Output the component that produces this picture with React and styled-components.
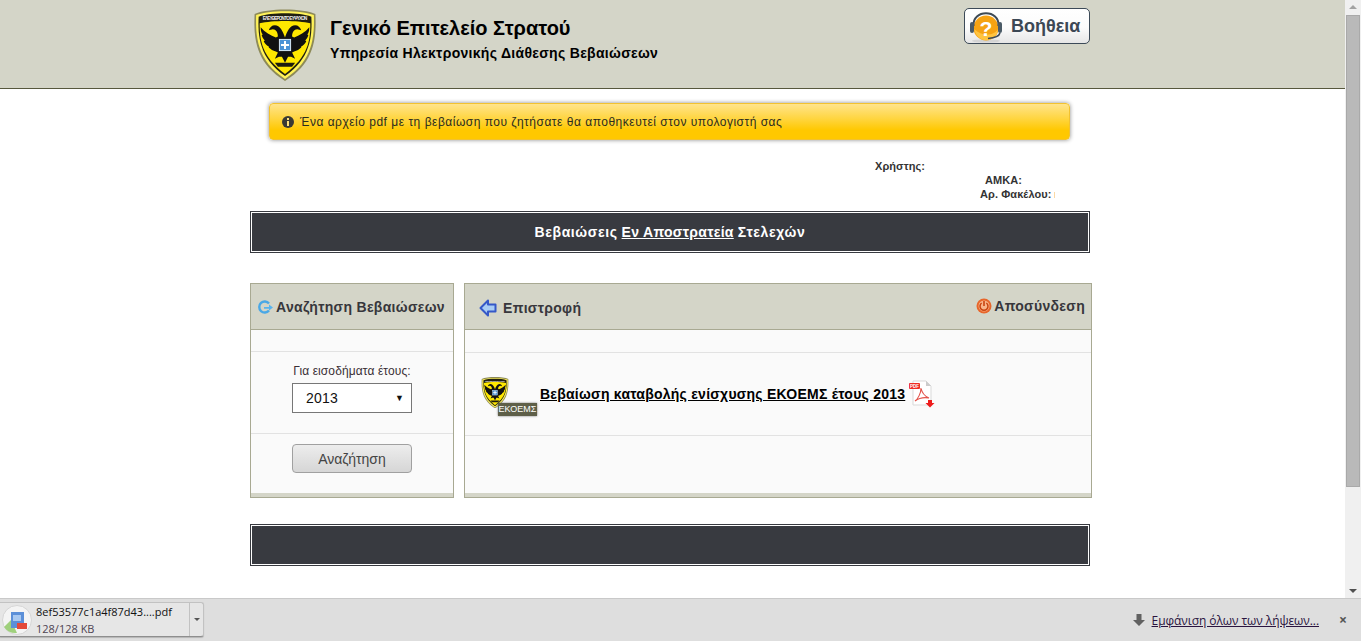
import styled, { createGlobalStyle } from "styled-components";

const GlobalStyle = createGlobalStyle`
  html, body {
    margin: 0;
    padding: 0;
    height: 100%;
    overflow: hidden;
    background: #fff;
    font-family: "Liberation Sans", Arial, sans-serif;
  }
`;

const Screen = styled.div`
  width: 1361px;
  height: 641px;
  display: grid;
  grid-template-columns: 1345px 16px;
  grid-template-rows: 598px 43px;
`;

const Page = styled.div`
  overflow: hidden;
  background: #fff;
`;

const Header = styled.header`
  height: 88px;
  background: #d4d5c8;
  border-bottom: 1px solid #57583d;
`;

const Wrap = styled.div`
  width: 840px;
  margin-left: 250px;
`;

const HeaderRow = styled(Wrap)`
  height: 88px;
  display: flex;
  align-items: flex-start;
`;

const LogoBox = styled.div`
  margin: 7px 0 0 3px;
  width: 64px;
  height: 74px;
`;

const Titles = styled.div`
  margin: 17px 0 0 13px;
  flex: 1;
  color: #000;
  font-weight: bold;
`;

const Title = styled.div`
  font-size: 20px;
  line-height: 23px;
`;

const Subtitle = styled.div`
  margin-top: 5px;
  font-size: 14px;
  line-height: 16px;
  letter-spacing: 0.3px;
`;

const HelpButton = styled.div`
  margin: 8px 0 0;
  width: 120px;
  height: 34px;
  border: 1px solid #3c4a58;
  border-radius: 5px;
  background: linear-gradient(#ffffff 0%, #fbfbfb 55%, #e6e6e6 100%);
  display: flex;
  align-items: center;
  gap: 8px;
  padding-left: 4px;
  box-sizing: content-box;
  color: #3c4855;
  font-size: 18px;
  font-weight: bold;
`;

const Alert = styled.div`
  margin: 14px 0 0 19px;
  width: 801px;
  height: 37px;
  box-sizing: border-box;
  border-radius: 4px;
  border: 1px solid #f2c230;
  background: linear-gradient(#ffe48c 0%, #ffd43a 45%, #ffc800 75%, #ffc800 100%);
  box-shadow: 0 0 4px #8c8c8c;
  display: flex;
  align-items: center;
  padding: 1px 0 0 12px;
  gap: 6px;
  font-size: 12px;
  letter-spacing: 0.5px;
  color: #2c2c1e;
`;

const UserInfo = styled.div`
  position: relative;
  height: 71px;
`;

const InfoLines = styled.div`
  padding-top: 19px;
  display: grid;
  grid-template-rows: repeat(3, 14px);
  font-size: 11px;
  line-height: 14px;
  font-weight: bold;
  letter-spacing: 0.08px;
  color: #333;
`;

const InfoLine = styled.div`
  padding-left: ${(p) => p.$indent}px;
`;

const Tick = styled.span`
  display: inline-block;
  width: 1px;
  height: 6px;
  margin-left: 3px;
  background: #fbd9a5;
`;

const DarkBar = styled.div`
  height: 40px;
  background: #383a40;
  border: 1px solid #383a40;
  box-shadow: inset 0 0 0 1px #fff;
  display: flex;
  align-items: center;
  justify-content: center;
  color: #fff;
  font-size: 14px;
  font-weight: bold;
  letter-spacing: 0.6px;

  u {
    margin: 0 4px;
    letter-spacing: 0.3px;
  }
`;

const Panels = styled.div`
  display: flex;
  gap: 10px;
  margin: 30px 0 26px;
`;

const Panel = styled.section`
  width: ${(p) => p.$width}px;
  height: 215px;
  box-sizing: border-box;
  border: 1px solid #a8a992;
  background: #fafafa;
  display: flex;
  flex-direction: column;
  flex-shrink: 0;
`;

const PanelHead = styled.div`
  height: 45px;
  flex-shrink: 0;
  background: #d4d5c8;
  border-bottom: 1px solid #a8a992;
  display: flex;
  align-items: center;
  justify-content: space-between;
  font-size: 14px;
  font-weight: bold;
  color: #37373c;
  letter-spacing: 0.3px;
`;

const HeadItem = styled.div`
  display: flex;
  align-items: center;
  gap: ${(p) => p.$gap}px;
  padding: ${(p) => p.$pad};
`;

const Row = styled.div`
  height: ${(p) => p.$height}px;
  flex-shrink: 0;
  box-sizing: border-box;
  border-bottom: 1px solid #e2e2e2;
`;

const FieldRow = styled(Row)`
  display: flex;
  flex-direction: column;
  align-items: center;
  padding-top: 12px;
`;

const FieldLabel = styled.div`
  font-size: 12px;
  line-height: 14px;
  letter-spacing: 0.1px;
  color: #3a3036;
`;

const Select = styled.div`
  margin-top: 5px;
  width: 120px;
  height: 30px;
  box-sizing: border-box;
  border: 1px solid #777;
  background: #fff;
  display: flex;
  align-items: center;
  justify-content: space-between;
  padding: 0 7px 0 13px;
  font-size: 14px;
  letter-spacing: 0.2px;
  color: #111;

  span:last-child {
    font-size: 9px;
  }
`;

const ButtonRow = styled.div`
  flex: 1;
  display: flex;
  justify-content: center;
  padding-top: 10px;
`;

const SearchButton = styled.div`
  width: 120px;
  height: 29px;
  box-sizing: border-box;
  border: 1px solid #a0a0a0;
  border-radius: 4px;
  background: linear-gradient(#ededed, #d6d6d6);
  display: flex;
  align-items: center;
  justify-content: center;
  font-size: 14px;
  color: #444;
`;

const Strip = styled.div`
  height: 4px;
  flex-shrink: 0;
  margin-top: auto;
  background: #d4d5c8;
`;

const DocRow = styled(Row)`
  display: flex;
  align-items: center;
  padding: 0 0 0 16px;
`;

const DocLink = styled.a`
  margin: 0 4px 0 3px;
  color: #000;
  font-size: 14px;
  font-weight: bold;
  letter-spacing: 0.24px;
  text-decoration: underline;
`;

const BadgeLogo = styled.div`
  position: relative;
  width: 56px;
  height: 44px;
  padding-top: 4px;
  box-sizing: border-box;
  flex-shrink: 0;
`;

const LogoBadge = styled.span`
  position: absolute;
  left: 17px;
  top: 31px;
  width: 39px;
  height: 13px;
  background: #5e5f48;
  box-shadow: 0 0 2px #777;
  color: #fff;
  font-size: 9px;
  line-height: 13px;
  text-align: center;
`;

const Scrollbar = styled.div`
  grid-column: 2;
  grid-row: 1;
  background: #f0f0f0;
  display: flex;
  flex-direction: column;
  align-items: center;
`;

const ScrollArrow = styled.div`
  width: 0;
  height: 0;
  margin: ${(p) => (p.$down ? "auto 0 5px" : "5px 0 4px")};
  border-left: 4px solid transparent;
  border-right: 4px solid transparent;
  ${(p) =>
    p.$down ? "border-top: 4px solid #505050;" : "border-bottom: 4px solid #a3a3a3;"}
`;

const ScrollThumb = styled.div`
  width: 14px;
  height: 472px;
  box-sizing: border-box;
  margin-top: 2px;
  background: #b9b9b9;
  border: 1px solid #a9a9a9;
`;

const DownloadBar = styled.div`
  grid-column: 1 / 3;
  grid-row: 2;
  box-sizing: border-box;
  border-top: 1px solid #c9c9c9;
  background: #dedede;
  display: flex;
  align-items: center;
  justify-content: space-between;
  padding: 0 14px 0 0;
  font-family: "Open Sans", "Noto Sans", sans-serif;
`;

const DownloadItem = styled.div`
  margin-top: -1px;
  width: 204px;
  height: 35px;
  box-sizing: border-box;
  border: 1px solid #c2c2c2;
  border-left: none;
  border-bottom: 1px solid #8e8e8e;
  border-radius: 0 3px 3px 0;
  background: #e6e6e6;
  box-shadow: 0 1px 1px #b5b5b5;
  display: flex;
`;

const FileIcon = styled.div`
  width: 32px;
  margin-left: 1px;
  display: flex;
  align-items: center;
  justify-content: center;
`;

const FileText = styled.div`
  flex: 1;
  padding-left: 3px;
  font-size: 11px;
  line-height: 17px;
  color: #111;
`;

const FileSize = styled.div`
  color: #4e4452;
`;

const DropArrow = styled.div`
  width: 13px;
  border-left: 1px solid #c2c2c2;
  display: flex;
  align-items: center;
  justify-content: center;

  &::after {
    content: "";
    border-left: 3px solid transparent;
    border-right: 3px solid transparent;
    border-top: 3px solid #555;
  }
`;

const DownloadRight = styled.div`
  display: flex;
  align-items: center;
`;

const AllLink = styled.a`
  margin-left: 7px;
  color: #2a1440;
  font-size: 12px;
  letter-spacing: -0.07px;
  text-decoration: underline;
`;

const CloseX = styled.span`
  margin-left: 20px;
  color: #555;
  font-size: 14px;
  font-weight: bold;
  line-height: 14px;
`;

const EAGLE_HALF =
  "M32 31 C30 25 27 19 22 19 C19 19 17 21 16 24 L20 23 C23 23 25 26 25 30 L23 31 C18 29 12 26 8 21 C8 25 9 27 10 28 L9 29 C10 32 11 33 12 34 L11 35 C13 38 14 39 16 40 L16 41 C18 43 20 44 23 45 L25 46 L22 52 L26 50 L29 50 L32 56 Z";

function Emblem({ size = 64 }) {
  return (
    <svg width={size} height={size * 1.156} viewBox="2 1 60 73" style={{ display: "block" }}>
      <path d="M2 8 C14 2 50 2 62 8 C63 30 62 56 32 74 C2 56 1 30 2 8 Z" fill="#8d8a58" />
      <path d="M3.5 9 C16 4 48 4 60.5 9 C61 30 60 54 32 72 C4 54 3 30 3.5 9 Z" fill="#fff35a" />
      <path d="M6 10.5 C18 6 46 6 58 10.5 C59 30 57 52 32 69 C7 52 5 30 6 10.5 Z" fill="#201f10" />
      <path d="M7 17 C20 14 44 14 57 17 C57 34 55 50 32 67 C9 50 7 34 7 17 Z" fill="#ffe800" />
      <text x="32" y="13.5" textAnchor="middle" fontSize="4.5" fontWeight="bold" fill="#eee" fontFamily="Liberation Sans" textLength="44">
        ΕΛΕΥΘΕΡΟΝ ΤΟ ΕΥΨΥΧΟΝ
      </text>
      <path d={EAGLE_HALF} fill="#111" />
      <path d={EAGLE_HALF} fill="#111" transform="matrix(-1 0 0 1 64 0)" />
      <rect x="26.5" y="33" width="11" height="11" fill="#4b93d6" stroke="#d5e7f5" strokeWidth="1" />
      <path d="M32 34.5 V42.5 M28 38.5 H36" stroke="#fff" strokeWidth="2" />
      <path d="M22 56 L42 56 L39 60 L25 60 Z" fill="#1d1c10" />
    </svg>
  );
}

function HeadsetIcon() {
  return (
    <svg width="34" height="34" viewBox="0 0 34 34">
      <ellipse cx="17" cy="32" rx="14" ry="1.6" fill="#d4d4d4" />
      <circle cx="17" cy="19" r="12.5" fill="#f6a313" />
      <path d="M5 20 C7 28 13 32 19 31 C25 30 29 25 29 20 C26 26 14 29 5 20 Z" fill="#ffc440" />
      <path d="M4.5 17 C3 0 31 0 29.5 17" fill="none" stroke="#3d4a55" strokeWidth="2" />
      <rect x="1" y="13" width="4" height="11" rx="2" fill="#4a5a66" />
      <rect x="29" y="13" width="4" height="11" rx="2" fill="#4a5a66" />
      <path d="M31 24 C30 28 25 29 19 29.5" fill="none" stroke="#3d4a55" strokeWidth="1.5" />
      <text x="17" y="27" textAnchor="middle" fontSize="21" fontWeight="bold" fill="#fff" fontFamily="Liberation Sans">?</text>
    </svg>
  );
}

function InfoIcon() {
  return (
    <svg width="12" height="12" viewBox="0 0 12 12">
      <circle cx="6" cy="6" r="6" fill="#3a3a34" />
      <rect x="5" y="2" width="2" height="2" fill="#ffe07a" />
      <rect x="5" y="5" width="2" height="5" fill="#ffe07a" />
    </svg>
  );
}

function RefreshIcon() {
  return (
    <svg width="16" height="14" viewBox="0 0 16 14">
      <path d="M12 3.5 A5.5 5.5 0 1 0 12 10.5" fill="none" stroke="#4aa8e6" strokeWidth="2.4" />
      <path d="M7 7 H12 V4.5 L16 7.5 L12 10.5 V8.8 H7 Z" fill="#58b4ee" />
    </svg>
  );
}

function BackIcon() {
  return (
    <svg width="18" height="18" viewBox="0 0 18 18">
      <path d="M9 1.5 L1.5 9 L9 16.5 V12.5 H16.5 V5.5 H9 Z" fill="#a9cdf5" stroke="#3558c8" strokeWidth="2" strokeLinejoin="round" />
    </svg>
  );
}

function PowerIcon() {
  return (
    <svg width="16" height="16" viewBox="0 0 16 16">
      <circle cx="8" cy="8" r="7.5" fill="#e8662a" />
      <circle cx="8" cy="8" r="5.5" fill="#f7b48a" />
      <path d="M5.6 5 A4 4 0 1 0 10.4 5" fill="none" stroke="#c8430f" strokeWidth="1.5" />
      <path d="M8 3 V8" stroke="#c8430f" strokeWidth="1.6" />
    </svg>
  );
}

function PdfIcon() {
  return (
    <svg width="26" height="28" viewBox="0 0 26 28">
      <path d="M4 1 H17 L22 6 V25 H4 Z" fill="#fff" stroke="#d9d9d9" />
      <path d="M17 1 V6 H22 Z" fill="#ccc" />
      <rect x="0" y="3" width="11" height="6" rx="1" fill="#ee2b24" />
      <text x="5.5" y="8" textAnchor="middle" fontSize="4.5" fontWeight="bold" fill="#fff" fontFamily="Liberation Sans">PDF</text>
      <path d="M6 21 C9 19 12 13 12 8 C13 13 15 16 20 18 C15 17 10 18 6 21 Z" fill="none" stroke="#e3524a" strokeWidth="1.1" />
      <path d="M19 20 H23 V23 H25.5 L21 27.5 L16.5 23 H19 Z" fill="#ee1c1c" />
    </svg>
  );
}

function FileThumb() {
  return (
    <svg width="30" height="30" viewBox="0 0 30 30">
      <circle cx="15" cy="15" r="14.5" fill="#f4f4f4" stroke="#d5d5d5" />
      <path d="M2 22 L9 15 L15 28 A14 14 0 0 1 2 22 Z" fill="#9fd07c" />
      <rect x="9" y="7" width="13" height="16" fill="#5b8fd8" />
      <rect x="11" y="10" width="8" height="6" fill="#a8c8f0" />
      <rect x="15" y="18" width="10" height="6" fill="#e34a3a" />
    </svg>
  );
}

function TrayArrow() {
  return (
    <svg width="12" height="12" viewBox="0 0 12 12">
      <path d="M3.5 0 H8.5 V6 H12 L6 12 L0 6 H3.5 Z" fill="#616161" />
    </svg>
  );
}

export default function App() {
  return (
    <Screen>
      <GlobalStyle />
      <Page>
        <Header>
          <HeaderRow>
            <LogoBox>
              <Emblem />
            </LogoBox>
            <Titles>
              <Title>Γενικό Επιτελείο Στρατού</Title>
              <Subtitle>Υπηρεσία Ηλεκτρονικής Διάθεσης Βεβαιώσεων</Subtitle>
            </Titles>
            <HelpButton>
              <HeadsetIcon />
              Βοήθεια
            </HelpButton>
          </HeaderRow>
        </Header>
        <Wrap>
          <Alert>
            <InfoIcon />
            Ένα αρχείο pdf με τη βεβαίωση που ζητήσατε θα αποθηκευτεί στον υπολογιστή σας
          </Alert>
          <UserInfo>
            <InfoLines>
              <InfoLine $indent={625}>Χρήστης:</InfoLine>
              <InfoLine $indent={735}>ΑΜΚΑ:</InfoLine>
              <InfoLine $indent={730}>
                Αρ. Φακέλου:
                <Tick />
              </InfoLine>
            </InfoLines>
          </UserInfo>
          <DarkBar>
            Βεβαιώσεις <u>Εν Αποστρατεία</u> Στελεχών
          </DarkBar>
          <Panels>
            <Panel $width={204}>
              <PanelHead>
                <HeadItem $gap={3} $pad="0 0 0 6px">
                  <RefreshIcon />
                  Αναζήτηση Βεβαιώσεων
                </HeadItem>
              </PanelHead>
              <Row $height={22} />
              <FieldRow $height={82}>
                <FieldLabel>Για εισοδήματα έτους:</FieldLabel>
                <Select>
                  <span>2013</span>
                  <span>▼</span>
                </Select>
              </FieldRow>
              <ButtonRow>
                <SearchButton>Αναζήτηση</SearchButton>
              </ButtonRow>
              <Strip />
            </Panel>
            <Panel $width={628}>
              <PanelHead>
                <HeadItem $gap={6} $pad="2px 0 0 14px">
                  <BackIcon />
                  Επιστροφή
                </HeadItem>
                <HeadItem $gap={2} $pad="0 6px 2px 0">
                  <PowerIcon />
                  Αποσύνδεση
                </HeadItem>
              </PanelHead>
              <Row $height={23} />
              <DocRow $height={83}>
                <BadgeLogo>
                  <Emblem size={28} />
                  <LogoBadge>ΕΚΟΕΜΣ</LogoBadge>
                </BadgeLogo>
                <DocLink>Βεβαίωση καταβολής ενίσχυσης ΕΚΟΕΜΣ έτους 2013</DocLink>
                <PdfIcon />
              </DocRow>
              <Strip />
            </Panel>
          </Panels>
          <DarkBar />
        </Wrap>
      </Page>
      <Scrollbar>
        <ScrollArrow />
        <ScrollThumb />
        <ScrollArrow $down />
      </Scrollbar>
      <DownloadBar>
        <DownloadItem>
          <FileIcon>
            <FileThumb />
          </FileIcon>
          <FileText>
            8ef53577c1a4f87d43....pdf
            <FileSize>128/128 KB</FileSize>
          </FileText>
          <DropArrow />
        </DownloadItem>
        <DownloadRight>
          <TrayArrow />
          <AllLink>Εμφάνιση όλων των λήψεων...</AllLink>
          <CloseX>×</CloseX>
        </DownloadRight>
      </DownloadBar>
    </Screen>
  );
}
